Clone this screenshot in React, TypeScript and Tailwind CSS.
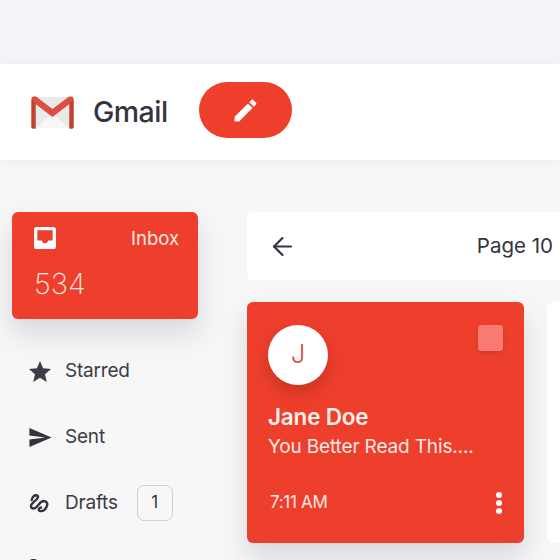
import React from 'react';
import { ArrowLeft } from 'lucide-react';

const font = "font-['Inter','Liberation_Sans',sans-serif]";

function GmailLogo() {
  return (
    <svg width="43" height="33" viewBox="0 0 43 33">
      <rect x="1" y="1" width="41" height="31" rx="1" fill="#e9e9e9" />
      <path d="M5 32 L21.5 17 L38 32 Z" fill="#f6f6f6" />
      <path d="M0.5 2.5 Q0.5 0.5 2.5 0.5 L5 0.5 L21.5 13 L38 0.5 L40.5 0.5 Q42.5 0.5 42.5 2.5 L42.5 31 Q42.5 32.5 41 32.5 L38.5 32.5 L38.5 8 L21.5 21 L4.5 8 L4.5 32.5 L2 32.5 Q0.5 32.5 0.5 31 Z" fill="#d8503f" />
      <path d="M0.5 3 L4.5 8 L4.5 32.5 L2 32.5 Q0.5 32.5 0.5 31 Z M42.5 3 L38.5 8 L38.5 32.5 L41 32.5 Q42.5 32.5 42.5 31 Z" fill="#c2402f" />
    </svg>
  );
}

function InboxIcon() {
  return (
    <svg width="22" height="22" viewBox="0 0 23 23">
      <rect width="23" height="23" rx="3" fill="#fff" />
      <path d="M3.5 3.5 H19.5 V14 H15 Q14 17 11.5 17 Q9 17 8 14 H3.5 Z" fill="#ee3f2c" />
    </svg>
  );
}

function DraftsIcon() {
  return (
    <svg width="21" height="19" viewBox="0 0 21 19" fill="none" stroke="#33343c" strokeWidth="2.4" strokeLinecap="round" strokeLinejoin="round">
      <path d="M2.7 6 C3.5 3 5 1.2 7 1.3 C10 1.8 9.5 3.5 7 6 C4 9 1.5 10.5 2 12.5 C2.5 15.5 6 15 8 12.5 C10 10 12 7 15 7 C18.5 7.5 19 10 17.5 13 C16 16 13.5 17.5 11 17 C9 16.5 9.5 14 12 13.5" />
    </svg>
  );
}

function NavRow({ icon, label, badge }: { icon: React.ReactNode; label: string; badge?: string }) {
  return (
    <div className="flex h-[66px] items-center pl-[17px]">
      <div className="flex w-[36px] items-center">{icon}</div>
      <span className="text-[19px] tracking-[-0.2px] text-[#3b3c44]">{label}</span>
      {badge && (
        <span className="ml-[19px] flex h-[36px] w-[36px] items-center justify-center rounded-[7px] border border-[#cfcfcf] text-[17px] text-[#33343c]">
          {badge}
        </span>
      )}
    </div>
  );
}

export default function App() {
  return (
    <div className={`flex h-[560px] w-[560px] flex-col overflow-hidden bg-[#f7f7f8] ${font}`}>
      <div className="h-[64px] shrink-0 bg-[#f3f5fb]" />

      <header className="flex h-[96px] shrink-0 items-center bg-white pl-[31px] shadow-[0_2px_14px_rgba(0,0,0,0.05)]">
        <GmailLogo />
        <span className="ml-[19px] text-[28.5px] font-medium tracking-[-0.5px] text-[#33343f]">Gmail</span>
        <button className="mb-[4px] ml-[31px] flex h-[56px] w-[93px] items-center justify-center rounded-full bg-[#ee3f2c]">
          <svg width="29" height="29" viewBox="0 0 24 24" fill="#fff">
            <path d="M3 17.25V21h3.75L17.81 9.94l-3.75-3.75L3 17.25zM20.71 7.04c.39-.39.39-1.02 0-1.41l-2.34-2.34c-.39-.39-1.02-.39-1.41 0l-1.83 1.83 3.75 3.75 1.83-1.83z" />
          </svg>
        </button>
      </header>

      <div className="flex min-h-0 flex-1 pt-[52px]">
        <aside className="ml-[12px] w-[186px] shrink-0">
          <div className="h-[107px] rounded-[6px] bg-[#ee3f2c] pl-[22px] pr-[19px] pt-[15px] shadow-[0_14px_28px_rgba(60,70,90,0.18)]">
            <div className="flex items-start justify-between">
              <InboxIcon />
              <span className="text-[18.5px] leading-[22px] text-[#ffe9e4]">Inbox</span>
            </div>
            <div className="mt-[18px] text-[29px] font-extralight leading-[34px] text-[#ffe9e4]">534</div>
          </div>

          <div className="mt-[19px]">
            <NavRow
              icon={
                <svg width="22" height="21" viewBox="2 2 20 19" fill="#3b3c44">
                  <path d="M12 17.27L18.18 21l-1.64-7.03L22 9.24l-7.19-.61L12 2 9.19 8.63 2 9.24l5.46 4.73L5.82 21z" />
                </svg>
              }
              label="Starred"
            />
            <NavRow
              icon={
                <svg width="23" height="19" viewBox="2 3 21 18" fill="#33343c">
                  <path d="M2.01 21L2 14l15-2-15-2 .01-7L23 12 2.01 21z" />
                </svg>
              }
              label="Sent"
            />
            <NavRow icon={<DraftsIcon />} label="Drafts" badge="1" />
            <NavRow icon={<span className="block h-[20px] w-[9px] rounded-sm border-t-2 border-[#33343c]" />} label="" />
          </div>
        </aside>

        <main className="ml-[49px] flex min-w-0 flex-1 flex-col">
          <div className="flex h-[68px] shrink-0 items-center justify-between rounded-l-[6px] bg-white pl-[21px] pr-[7px]">
            <ArrowLeft size={29} strokeWidth={1.8} color="#33343f" />
            <span className="text-[20.5px] text-[#33343f]">Page 10</span>
          </div>

          <div className="mt-[22px] flex gap-[23px]">
            <article className="flex h-[241px] w-[277px] shrink-0 flex-col rounded-[6px] bg-[#ee3f2c] pl-[21px] pr-[21px] pt-[23px] shadow-[0_14px_28px_rgba(60,70,90,0.18)]">
              <div className="flex items-start justify-between">
                <div className="flex h-[60px] w-[60px] items-center justify-center rounded-full bg-white shadow-[0_8px_16px_rgba(120,30,20,0.3)]">
                  <span className="text-[25px] font-light text-[#d6493b]">J</span>
                </div>
                <div className="h-[26px] w-[25px] rounded-[3px] bg-[#f97a72] shadow-[0_2px_4px_rgba(120,30,20,0.25)]" />
              </div>
              <div className="mt-[18px] text-[22.5px] font-semibold leading-[28px] tracking-[-0.2px] text-[#fff0ec]">Jane Doe</div>
              <div className="text-[19px] leading-[32px] tracking-[-0.15px] text-[#ffe9e4]">You Better Read This....</div>
              <div className="mt-[27px] flex items-center justify-between pl-[2px]">
                <span className="text-[17px] tracking-[-0.3px] text-[#ffe9e4]">7:11 AM</span>
                <div className="mr-[1px] flex flex-col gap-[2px]">
                  <span className="h-[6px] w-[6px] rounded-full bg-white" />
                  <span className="h-[6px] w-[6px] rounded-full bg-white" />
                  <span className="h-[6px] w-[6px] rounded-full bg-white" />
                </div>
              </div>
            </article>
            <article className="h-[241px] flex-1 rounded-l-[6px] bg-white" />
          </div>
        </main>
      </div>
    </div>
  );
}
